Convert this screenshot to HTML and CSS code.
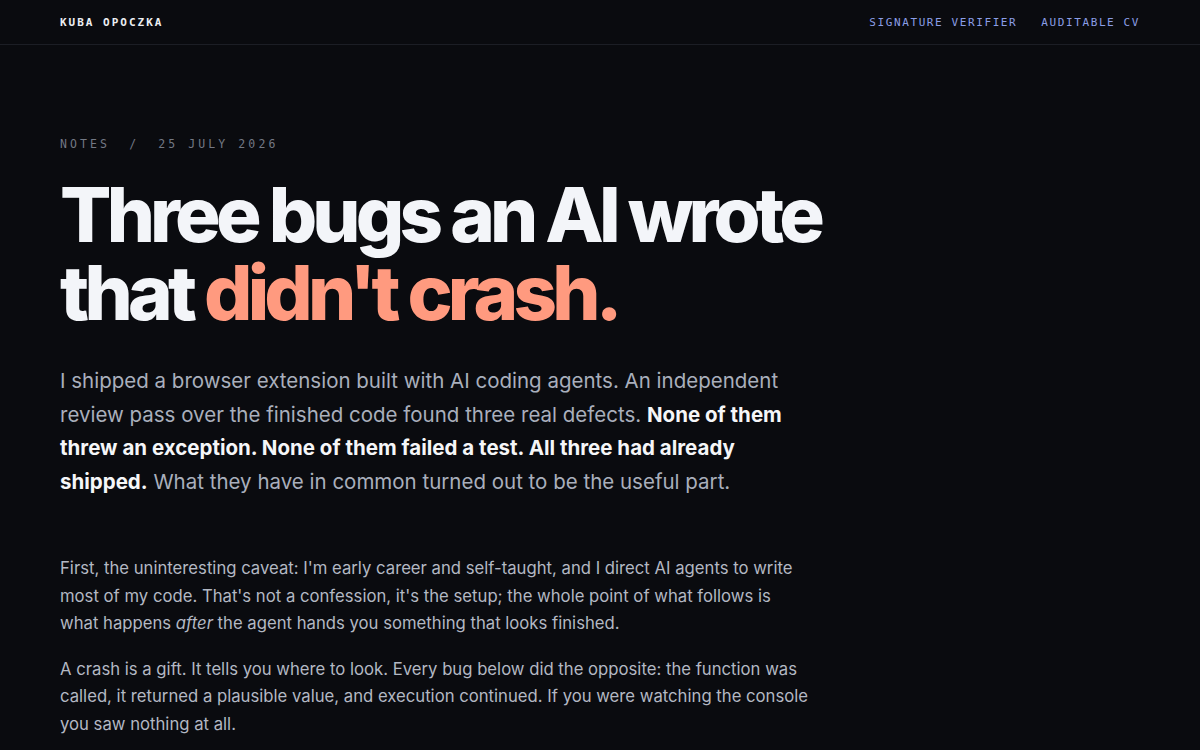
FILE: index.html
```html
<!DOCTYPE html>
<html lang="en">
<head>
<meta charset="utf-8">
<title>Three bugs an AI wrote that didn't crash</title>
<link rel="stylesheet" href="styles.css">
</head>
<body>
<header class="site-header">
  <a class="brand" href="#">KUBA OPOCZKA</a>
  <nav class="nav">
    <a href="#">SIGNATURE VERIFIER</a>
    <a href="#">AUDITABLE CV</a>
  </nav>
</header>
<main class="article">
  <p class="meta"><span>NOTES</span><span class="sep">/</span><span>25 JULY 2026</span></p>
  <h1 class="title">Three bugs an AI wrote<br>that <span class="accent">didn't crash.</span></h1>
  <p class="lead">I shipped a browser extension built with AI coding agents. An independent review pass over the finished code found three real defects. <strong>None of them threw an exception. None of them failed a test. All three had already shipped.</strong> What they have in common turned out to be the useful part.</p>
  <div class="body">
    <p>First, the uninteresting caveat: I'm early career and self-taught, and I direct AI agents to write most of my code. That's not a confession, it's the setup; the whole point of what follows is what happens <em>after</em> the agent hands you something that looks finished.</p>
    <p>A crash is a gift. It tells you where to look. Every bug below did the opposite: the function was called, it returned a plausible value, and execution continued. If you were watching the console you saw nothing at all.</p>
  </div>
</main>
</body>
</html>
```
FILE: styles.css
```css
html, body {
  margin: 0;
  padding: 0;
  background: #0a0b0f;
  color: #b4b9c4;
  font-family: Inter, "Noto Sans", sans-serif;
}
a { text-decoration: none; }

.site-header {
  height: 44px;
  display: flex;
  align-items: center;
  justify-content: space-between;
  padding: 0 60px;
  border-bottom: 1px solid #1c1e25;
  font-family: "DejaVu Sans Mono", "Liberation Mono", monospace;
  font-size: 11px;
}
.brand {
  color: #eceef2;
  font-weight: bold;
  letter-spacing: 2px;
}
.nav {
  display: flex;
  gap: 24px;
}
.nav a {
  color: #8b9ee6;
  letter-spacing: 1.6px;
}

.article {
  padding: 92px 60px 0;
  max-width: 760px;
}
.meta {
  margin: 0;
  font-family: "DejaVu Sans Mono", "Liberation Mono", monospace;
  font-size: 11.5px;
  letter-spacing: 3.1px;
  color: #737884;
  display: flex;
  gap: 19px;
}
.title {
  margin: 24px -60px 0 0;
  font-size: 76px;
  line-height: 78px;
  font-weight: 800;
  letter-spacing: -4.8px;
  color: #f3f5f9;
}
.accent { color: #ff9a7f; }

.lead {
  margin: 33px 0 0;
  font-size: 20.5px;
  line-height: 33.5px;
  color: #a9afbc;
}
.lead strong {
  color: #f5f6f8;
  font-weight: 700;
}
.body {
  margin-top: 57px;
  max-width: 752px;
}
.body p {
  margin: 0 0 18px;
  font-size: 16.7px;
  line-height: 27.5px;
  color: #b3b8c3;
}
```
